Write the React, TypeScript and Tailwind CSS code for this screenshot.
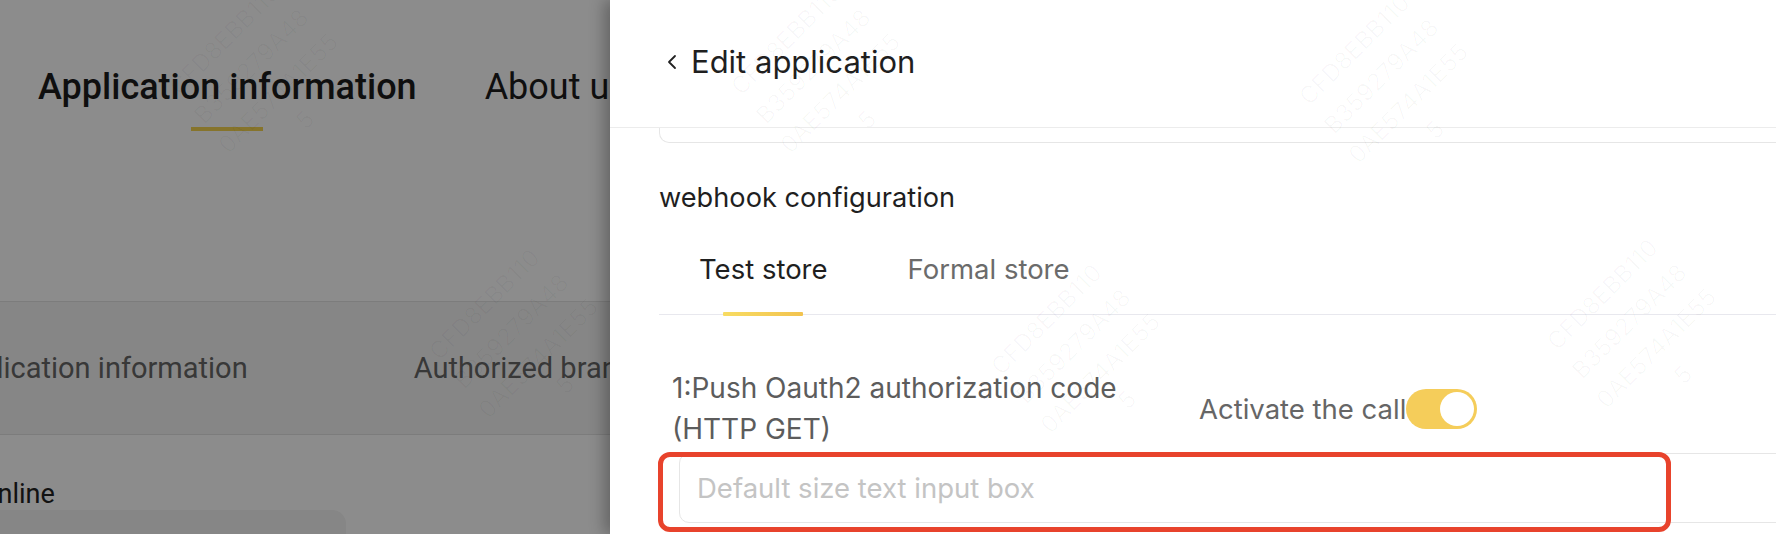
import React from 'react';

const marks = [
  { id: 'a0', pos: 'left-[265px] top-[80px]' },
  { id: 'a1', pos: 'left-[827px] top-[80px]' },
  { id: 'a2', pos: 'left-[1395px] top-[90px]' },
  { id: 'b0', pos: 'left-[525px] top-[345px]' },
  { id: 'b1', pos: 'left-[1087px] top-[360px]' },
  { id: 'b2', pos: 'left-[1643px] top-[335px]' },
];

function Watermark({ pos }: { pos: string }) {
  return (
    <div
      className={`absolute ${pos} -translate-x-1/2 -translate-y-1/2 -rotate-45 whitespace-nowrap text-center font-['Inter',sans-serif] text-[24px] leading-[38px] text-[rgba(0,0,0,0.028)]`}
    >
      CFD8EBB110
      <br />
      B359279A48
      <br />
      0AE574A1E55
      <br />
      5
    </div>
  );
}

function BackgroundPage() {
  return (
    <div className="flex h-full flex-col font-['Roboto',sans-serif]">
      {/* top tabs */}
      <div className="flex h-[302px] shrink-0 flex-col border-b border-[#e2e2e2] pl-[38px] pt-[66px]">
        <div className="flex gap-[68px]">
          <div className="flex flex-col items-center">
            <span className="text-[36px] font-medium leading-[42px] text-[#1c1c1c]">Application information</span>
            <span className="mt-[19px] h-[4px] w-[72px] bg-[#f5d350]" />
          </div>
          <span className="text-[36px] leading-[42px] text-[#1c1c1c]">About us</span>
        </div>
      </div>

      {/* sub tabs */}
      <div className="flex h-[133px] shrink-0 items-center gap-[166px] border-b border-[#e2e2e2] bg-[#f5f5f5]">
        <span className="-ml-[55px] text-[29px] leading-[36px] text-[#666]">Application information</span>
        <span className="text-[29px] leading-[36px] text-[#666]">Authorized brands</span>
      </div>

      {/* online section */}
      <div className="flex shrink-0 flex-col pt-[44px]">
        <span className="-ml-[21px] text-[27px] leading-[30px] text-[#222]">Online</span>
        <div className="-ml-[20px] mt-[1px] h-[60px] w-[366px] rounded-[14px] bg-[#f4f4f4]" />
      </div>
    </div>
  );
}

function Drawer() {
  return (
    <div className="flex h-full flex-col overflow-hidden bg-white font-['Inter',sans-serif] shadow-[-6px_0_14px_rgba(0,0,0,0.28)]">
      {/* header */}
      <div className="flex h-[128px] shrink-0 items-center border-b border-[#ececec] pb-[4px] pl-[56px]">
        <svg width="12" height="16" viewBox="0 0 12 16" fill="none" className="mr-[13px]">
          <path d="M9 2L3 8l6 6" stroke="#222" strokeWidth="1.8" strokeLinecap="round" strokeLinejoin="round" />
        </svg>
        <span className="text-[31px] leading-[38px] text-[#1f1f1f]">Edit application</span>
      </div>

      {/* body */}
      <div className="w-[1300px] shrink-0 pl-[49px]">
        <div className="h-[15px] rounded-b-[10px] border border-t-0 border-[#e6e6e6]" />

        <div className="mt-[37px] text-[27.2px] leading-[36px] text-[#1f1f1f]">webhook configuration</div>

        {/* store tabs */}
        <div className="mt-[35px] flex h-[64px] border-b border-[#e8e8ee] pl-[40px]">
          <div className="relative h-full">
            <span className="text-[27.5px] leading-[36px] text-[#1f1f1f]">Test store</span>
            <span className="absolute bottom-[-2px] left-1/2 h-[4px] w-[80px] -translate-x-1/2 rounded-[1px] bg-gradient-to-r from-[#f8dc62] to-[#f2c34f]" />
          </div>
          <span className="ml-[80px] text-[27.5px] leading-[36px] text-[#6b6b6b]">Formal store</span>
        </div>

        {/* call row */}
        <div className="mt-[53px] flex items-center pl-[13px]">
          <div className="w-[480px] text-[28px] leading-[41px] text-[#5c5c5c]">
            1:Push Oauth2 authorization code (HTTP GET)
          </div>
          <span className="ml-[47px] text-[27.5px] leading-[36px] text-[#666]">Activate the call</span>
          <span className="flex h-[40px] w-[71px] items-center justify-end rounded-full bg-[#f5cd5a] pr-[3px]">
            <span className="h-[34px] w-[34px] rounded-full bg-white" />
          </span>
        </div>

        {/* url input */}
        <div className="relative ml-[20px] mt-[3px]">
          <input
            type="text"
            placeholder="Default size text input box"
            className="h-[70px] w-[1200px] rounded-[10px] border-[1.5px] border-[#e6e6e6] px-[17px] text-[27.5px] text-[#333] outline-none placeholder:text-[#c4c4c4]"
          />
          <div className="pointer-events-none absolute left-[-21px] top-[-1px] h-[80px] w-[1013px] rounded-[12px] border-[5px] border-[#e8432c]" />
        </div>
      </div>
    </div>
  );
}

export default function App() {
  return (
    <div className="relative h-[534px] w-[1776px] overflow-hidden bg-white">
      <BackgroundPage />
      {/* modal mask */}
      <div className="absolute inset-0 bg-black/45" />
      <div className="absolute bottom-0 left-[610px] right-0 top-0">
        <Drawer />
      </div>
      {/* watermark layer */}
      <div className="pointer-events-none absolute inset-0">
        {marks.map((m) => (
          <Watermark key={m.id} pos={m.pos} />
        ))}
      </div>
    </div>
  );
}
